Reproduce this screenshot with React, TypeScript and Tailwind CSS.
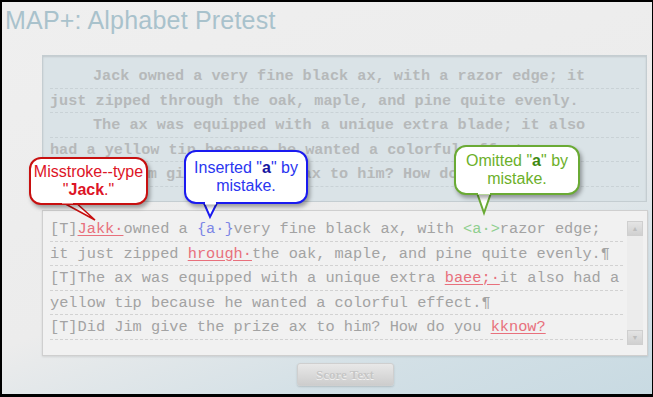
import React from 'react';

const mono = { fontFamily: '"Liberation Mono", "Courier New", monospace' };
const sans = { fontFamily: '"Liberation Sans", Arial, sans-serif' };

const originalLines = [
  { text: 'Jack owned a very fine black ax, with a razor edge; it', indent: true },
  { text: 'just zipped through the oak, maple, and pine quite evenly.', indent: false },
  { text: 'The ax was equipped with a unique extra blade; it also', indent: true },
  { text: 'had a yellow tip because he wanted a colorful effect.', indent: false },
  { text: 'Did Jim give the prize ax to him? How do you know?', indent: true },
];

const Err: React.FC<{ children: React.ReactNode }> = ({ children }) => (
  <span className="text-[#e8707c] underline decoration-[#e8707c] underline-offset-2">{children}</span>
);

const Line: React.FC<{ children: React.ReactNode }> = ({ children }) => (
  <div className="h-[24.5px] leading-[24.5px] whitespace-pre border-b border-dashed border-[#d2d2d2]">
    {children}
  </div>
);

const Bubble: React.FC<{
  className: string;
  border: string;
  text: string;
  children: React.ReactNode;
}> = ({ className, border, text, children }) => (
  <div
    className={`absolute rounded-[12px] border-2 bg-white text-[16px] leading-[18px] text-center shadow-[2px_3px_4px_rgba(0,0,0,0.35)] flex flex-col justify-center ${border} ${text} ${className}`}
    style={sans}
  >
    {children}
  </div>
);

export default function App() {
  return (
    <div className="w-[653px] h-[397px] overflow-hidden relative border-t-2 border-l-2 border-b-[3px] border-r border-black bg-[linear-gradient(160deg,#efefef_0%,#ececec_55%,#d3e0e6_80%,#c8dae2_100%)]">
      <h1 className="pl-[3px] pt-[4px] text-[25px] leading-[28px] text-[#a9c2cc] tracking-[0.2px]" style={sans}>
        MAP+: Alphabet Pretest
      </h1>

      <div className="ml-[40px] mr-[5px] mt-[21px] h-[147px] border border-[#c4cdd1] bg-[#dae3e7] px-[7px] pt-[8px] shadow-[inset_0_1px_2px_rgba(0,0,0,0.12)]">
        <div className="text-[15.2px] font-bold text-[#b6b9ba]" style={mono}>
          {originalLines.map((l, i) => (
            <div
              key={i}
              className={`h-[24.5px] leading-[24.5px] whitespace-pre border-b border-dashed border-[#c9d2d6] ${l.indent ? 'pl-[43px]' : ''}`}
            >
              {l.text}
            </div>
          ))}
        </div>
      </div>

      <div className="ml-[40px] mr-[4px] mt-[8px] h-[146px] border border-[#cfcfcf] bg-[#f1f1f1] flex shadow-[0_1px_2px_rgba(0,0,0,0.1)]">
        <div className="flex-1 pl-[7px] pr-[4px] pt-[6px] text-[15.3px] text-[#a3a3a3]" style={mono}>
          <Line>
            [T]<Err>Jakk·</Err>owned a <span className="text-[#7d86e6]">{'{a·}'}</span>very fine black ax, with{' '}
            <span className="text-[#8fcf8f]">{'<a·>'}</span>razor edge;
          </Line>
          <Line>
            it just zipped <Err>hrough·</Err>the oak, maple, and pine quite evenly.¶
          </Line>
          <Line>
            [T]The ax was equipped with a unique extra <Err>baee;·</Err>it also had a
          </Line>
          <Line>yellow tip because he wanted a colorful effect.¶</Line>
          <Line>
            [T]Did Jim give the prize ax to him? How do you <Err>kknow?</Err>
          </Line>
        </div>
        <div className="w-[16px] mr-[4px] mt-[10px] mb-[10px] flex flex-col justify-between bg-[#ececec]">
          <div className="h-[15px] bg-[linear-gradient(#e4e4e4,#d0d0d0)] border border-[#cfcfcf] text-[7px] leading-[13px] text-center text-[#bdbdbd]">▲</div>
          <div className="h-[15px] bg-[linear-gradient(#e4e4e4,#d0d0d0)] border border-[#cfcfcf] text-[7px] leading-[13px] text-center text-[#bdbdbd]">▼</div>
        </div>
      </div>

      <div className="flex justify-center pl-[36px] mt-[7px]">
        <button
          className="w-[97px] h-[23px] rounded-[3px] border border-[#cfcfcf] bg-[linear-gradient(#e8e8e8,#cdcdcd)] text-[13px] font-bold text-[#c6c6c6] [text-shadow:0_1px_0_#f4f4f4] shadow-[0_1px_2px_rgba(0,0,0,0.15)]"
          style={{ fontFamily: '"Liberation Serif", "Times New Roman", serif' }}
        >
          Score Text
        </button>
      </div>

      {/* callouts */}
      <svg className="absolute left-0 top-0 pointer-events-none" width="653" height="397">
        <polygon points="58,199 72,199 93,218" fill="#fff" stroke="#c81010" strokeWidth="1.5" />
        <polygon points="201,199 216,199 208,215" fill="#fff" stroke="#1a1af0" strokeWidth="2" />
        <polygon points="474,188 490,188 482,211" fill="#fff" stroke="#6aaa35" strokeWidth="2" />
      </svg>
      <Bubble className="left-[27px] top-[155px] w-[119px] h-[48px]" border="border-[#c81010]" text="text-[#dd1426]">
        <div>Misstroke--type</div>
        <div>
          "<b>Jack</b>."
        </div>
      </Bubble>
      <Bubble className="left-[182px] top-[148px] w-[124px] h-[54px]" border="border-[#1a1af0]" text="text-[#2a36f0]">
        <div>
          Inserted "<b className="text-[#1616a0]">a</b>" by
        </div>
        <div>mistake.</div>
      </Bubble>
      <Bubble className="left-[452px] top-[143px] w-[126px] h-[50px]" border="border-[#6aaa35]" text="text-[#6cb02a]">
        <div>
          Omitted "<b className="text-[#3f8a12]">a</b>" by
        </div>
        <div>mistake.</div>
      </Bubble>
      <svg className="absolute left-0 top-0 pointer-events-none" width="653" height="397">
        <line x1="60" y1="200" x2="71" y2="200" stroke="#fff" strokeWidth="3" />
        <line x1="203" y1="201" x2="214" y2="201" stroke="#fff" strokeWidth="3" />
        <line x1="476" y1="191" x2="488" y2="191" stroke="#fff" strokeWidth="3" />
      </svg>
    </div>
  );
}
